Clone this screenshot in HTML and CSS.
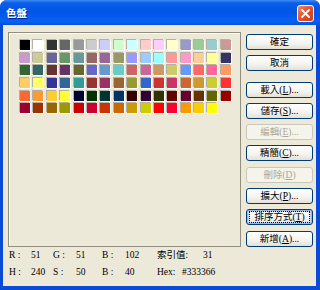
FILE: index.html
```html
<!DOCTYPE html>
<html lang="zh-Hant">
<head>
  <meta charset="UTF-8" />
  <title>色盤</title>
  <link rel="stylesheet" href="styles.css">
</head>
<body>
  <div class="window">
    <div class="titlebar">
      <span class="title">色盤</span>
      <span class="close">
        <svg width="9" height="9" viewBox="0 0 9 9"><path d="M1 1 L8 8 M8 1 L1 8" stroke="#fff" stroke-width="1.8" stroke-linecap="round"/></svg>
      </span>
    </div>

    <div class="content">
      <div class="main">
        <div class="panel">
          <div class="swatches" id="swatches"></div>
        </div>

        <div class="buttons">
          <button class="btn">確定</button>
          <button class="btn">取消</button>
          <button class="btn gap-top">載入(<u>L</u>)...</button>
          <button class="btn">儲存(<u>S</u>)...</button>
          <button class="btn" disabled>編輯(<u>E</u>)...</button>
          <button class="btn">精簡(<u>C</u>)...</button>
          <button class="btn" disabled>刪除(<u>D</u>)</button>
          <button class="btn">擴大(<u>P</u>)...</button>
          <button class="btn focused"><span class="focus-ring">排序方式(<u>T</u>)</span></button>
          <button class="btn">新增(<u>A</u>)...</button>
        </div>
      </div>

      <div class="info">
        <span class="lbl">R :</span><span class="val">51</span>
        <span class="lbl">G :</span><span class="val">51</span>
        <span class="lbl">B :</span><span class="val">102</span>
        <span class="extra"><span class="lbl-idx">索引值:</span>31</span>

        <span class="lbl">H :</span><span class="val">240</span>
        <span class="lbl">S :</span><span class="val">50</span>
        <span class="lbl">B :</span><span class="val">40</span>
        <span class="extra"><span class="lbl-hex">Hex:</span>#333366</span>
      </div>
    </div>
  </div>

  <script>
    var colors = [
      "#000000","#ffffff","#333333","#666666","#999999","#cccccc","#ccccff","#ccffcc",
      "#ccffff","#ffcccc","#ffccff","#ffffcc","#9999cc","#99cc99","#99cccc","#cc9999",
      "#cc99cc","#cccc99","#666699","#669966","#669999","#996666","#996699","#999966",
      "#9999ff","#99ccff","#99ffff","#ff9999","#ff99cc","#ffcc99","#ffff99","#333366",
      "#336633","#336666","#663333","#663366","#666633","#6666cc","#6699cc","#66cccc",
      "#cc6666","#cc6699","#cc9966","#cccc66","#6699ff","#ff6666","#ff6699","#ff9966",
      "#ffcc66","#ffff66","#333399","#336699","#339999","#993333","#993366","#996633",
      "#999933","#3366cc","#cc3333","#cc3366","#cc6633","#cc9933","#cccc33","#ff3333",
      "#ff6633","#ff9933","#ffcc33","#ffff33","#000033","#003300","#003333","#003366",
      "#330000","#330033","#333300","#660000","#660033","#663300","#666600","#990000",
      "#990033","#993300","#996600","#999900","#cc0000","#cc0033","#cc3300","#cc6600",
      "#cc9900","#cccc00","#ff0000","#ff0033","#ff9900","#ffcc00","#ffff00"
    ];
    var box = document.getElementById("swatches");
    colors.forEach(function(c) {
      var s = document.createElement("span");
      s.className = "swatch";
      s.style.background = c;
      box.appendChild(s);
    });
  </script>
</body>
</html>
```

FILE: styles.css
```css
body {
  margin: 0;
  background: #ffffff;
}
.window {
  width: 320px;
  height: 290px;
  box-sizing: border-box;
  background: #0a4ad8;
  border-radius: 7px 7px 0 0;
  padding: 0 4px 4px 3px;
  display: flex;
  flex-direction: column;
  font-family: "Liberation Serif", "Noto Sans CJK TC", serif;
  font-size: 9.5px;
  color: #000;
}
.titlebar {
  height: 25px;
  margin: 0 -4px 0 -3px;
  padding: 0 6px 0 6px;
  border-radius: 7px 7px 0 0;
  background: linear-gradient(to bottom, #3d8cf6 0%, #0a5ee8 12%, #0055e5 45%, #0662f2 85%, #0050dc 100%);
  display: flex;
  align-items: center;
  justify-content: space-between;
}
.title {
  color: #fff;
  font-family: "Noto Sans CJK TC", sans-serif;
  font-weight: bold;
  font-size: 10.5px;
  text-shadow: 1px 1px 0 #0a1c8a;
}
.close {
  width: 15px;
  height: 15px;
  border: 1px solid #fff;
  border-radius: 3px;
  background: linear-gradient(135deg, #ef8a6a 0%, #e0552e 45%, #c8401c 100%);
  display: flex;
  align-items: center;
  justify-content: center;
  margin-top: 1px;
}
.content {
  flex: 1;
  background: #ece9d8;
  padding: 7px 3px 0 5px;
  display: flex;
  flex-direction: column;
}
.main {
  display: flex;
  gap: 5px;
}
.panel {
  width: 233px;
  height: 215px;
  box-sizing: border-box;
  border: 1px solid #938f80;
  box-shadow: inset 1px 1px 0 #fbfaf5;
  padding: 7px 0 0 11px;
}
.swatches {
  display: grid;
  grid-template-columns: repeat(16, 10px);
  column-gap: 3.4px;
  row-gap: 2.7px;
}
.swatch {
  width: 10px;
  height: 10px;
  box-shadow: -1px -1px 0 #b5b2a4, 1px 1px 0 #ffffff;
}
.buttons {
  width: 67px;
  margin-top: 2px;
  display: flex;
  flex-direction: column;
  gap: 5.3px;
}
.btn {
  height: 16px;
  padding: 0;
  border: 1px solid #003c74;
  border-radius: 3px;
  background: linear-gradient(to bottom, #ffffff 0%, #f4f3ee 60%, #e3e0d6 100%);
  font-family: "Liberation Serif", "Noto Sans CJK TC", serif;
  font-size: 9.5px;
  color: #000;
  line-height: 14px;
  text-align: center;
}
.btn.gap-top {
  margin-top: 5px;
}
.btn:disabled {
  border-color: #c9c7ba;
  color: #aca899;
  background: #f5f4ea;
}
.btn.focused {
  box-shadow: inset 0 0 0 1px #9cb8ea, inset 0 0 0 2px #c4d4f4;
  padding: 1px 2px;
}
.focus-ring {
  display: block;
  outline: 1px dotted #000;
  outline-offset: -1px;
  line-height: 12px;
}
.info {
  display: grid;
  grid-template-columns: 22px 22px 23px 26px 23px 32px auto;
  padding-left: 1px;
  line-height: 17px;
}
.extra {
  white-space: nowrap;
}
.lbl-idx {
  display: inline-block;
  width: 46px;
}
.lbl-hex {
  display: inline-block;
  width: 25px;
}
```
